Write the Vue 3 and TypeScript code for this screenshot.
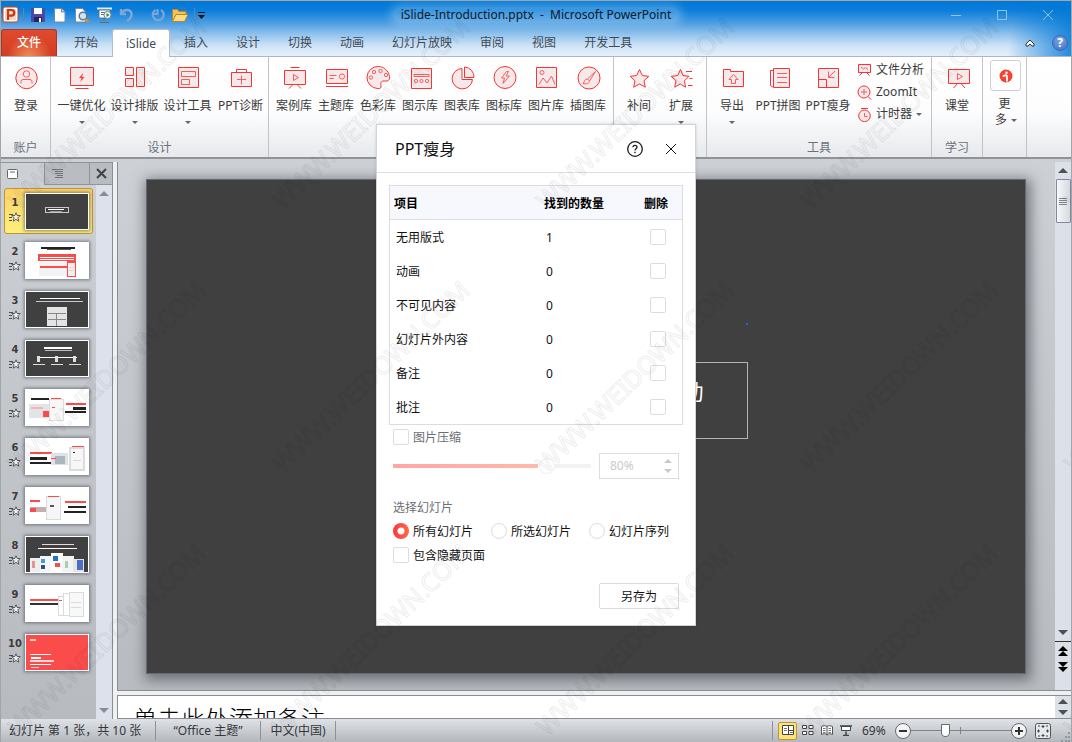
<script setup lang="ts">
import { ref } from 'vue'

interface Shape { d: string; kind?: 'soft' | 'thin' | 'solid' }
interface Tool { label: string; arrow?: boolean; wide?: boolean; shapes: Shape[] }
interface Group { title: string; size: string; tools: Tool[] }
interface Block { x: number; y: number; w: number; h: number; f: string }
interface Thumb { bg: string; blocks: Block[] }

const ring = (x: number, y: number, r: number): string =>
  `M${x - r} ${y}a${r} ${r} 0 1 0 ${2 * r} 0a${r} ${r} 0 1 0 ${-2 * r} 0z`

const b = (x: number, y: number, w: number, h: number, f: string): Block => ({ x, y, w, h, f })

const tabs: string[] = ['插入', '设计', '切换', '动画', '幻灯片放映', '审阅', '视图', '开发工具']

const star = 'M13.5 4.5l2.8 6 6.5.8-4.8 4.5 1.3 6.4-5.8-3.2-5.8 3.2 1.3-6.4-4.8-4.500 6.500-.8z'

const groups: Group[] = [
  {
    title: '账户', size: 'g-small',
    tools: [{ label: '登录', shapes: [
      { d: ring(13.5, 13, 10.7), kind: 'soft' },
      { d: ring(13.5, 9, 3.2), kind: 'thin' },
      { d: 'M8 18.5v-2a2 2 0 0 1 2-2h7a2 2 0 0 1 2 2v2', kind: 'thin' },
    ] }],
  },
  {
    title: '设计', size: 'g-design',
    tools: [
      { label: '一键优化', arrow: true, shapes: [
        { d: 'M1.5 2.5h23v18h-23z', kind: 'soft' }, { d: 'M6.5 23.5h13' },
        { d: 'M14 8l-4 5h2.4l-1 4 4.2-5h-2.4z', kind: 'solid' },
      ] },
      { label: '设计排版', arrow: true, shapes: [
        { d: 'M3.5 2.5h8v8h-8z', kind: 'soft' }, { d: 'M3.5 13.5h8v8h-8z', kind: 'soft' }, { d: 'M14.5 2.5h8v19h-8z', kind: 'soft' },
      ] },
      { label: '设计工具', arrow: true, shapes: [
        { d: 'M3.5 2.5h20v20h-20z', kind: 'soft' }, { d: 'M6.5 6.5h14v5h-14z', kind: 'thin' }, { d: 'M6.5 14.5h8v5h-8z', kind: 'thin' },
      ] },
      { label: 'PPT诊断', shapes: [
        { d: 'M3.5 7.5h20v14h-20z', kind: 'soft' }, { d: 'M8.5 7.5v-3h10v3' }, { d: 'M13.5 10.5v9M9 14.5h9', kind: 'thin' },
      ] },
    ],
  },
  {
    title: '', size: 'g-library',
    tools: [
      { label: '案例库', shapes: [
        { d: 'M3.5 5.5h21v14h-21z', kind: 'soft' }, { d: 'M9.5 2.5h9M12 19.5l-4 4M16 19.5l4 4' }, { d: 'M12.5 9.5v6l5-3z', kind: 'thin' },
      ] },
      { label: '主题库', shapes: [
        { d: 'M3.5 4.5h21v14h-21z', kind: 'soft' }, { d: 'M3 21.5h22' }, { d: 'M6.5 10.5h7M6.5 13.5h4.5' + ring(19, 11.5, 2.6), kind: 'thin' },
      ] },
      { label: '色彩库', shapes: [
        { d: 'M13.5 1.5a11 11 0 0 0-1 22c2.5.5 4-.5 3.5-3-.5-3 0-4.5 3-4.5h3c2-.5 3-2 2.5-4.5-.8-5.500-5.500-10-11-10z', kind: 'soft' },
        { d: ring(6, 12.5, 1.7) + ring(9, 7, 1.7) + ring(15.5, 6, 1.7) + ring(21, 10, 1.7), kind: 'thin' },
      ] },
      { label: '图示库', shapes: [
        { d: 'M4.5 3.5h20v20h-20z', kind: 'soft' }, { d: 'M7 9.500h15v2h-15z', kind: 'thin' }, { d: ring(9, 16, 1.6) + ring(14.5, 16, 1.6) + ring(20, 16, 1.6), kind: 'thin' },
      ] },
      { label: '图表库', shapes: [
        { d: 'M13 3.5a10.2 10.2 0 1 0 10.5 11H13z', kind: 'soft' }, { d: 'M15.5 2v10.5h9.5a10 10 0 0 0-9.5-10.5z', kind: 'soft' },
      ] },
      { label: '图标库', shapes: [
        { d: ring(14, 12.5, 11), kind: 'soft' }, { d: 'M15.5 6.5l-5 6.5h3l-1.5 5.5 6.5-7.5h-3.5l2.5-4.5z', kind: 'thin' },
      ] },
      { label: '图片库', shapes: [
        { d: 'M3.5 2.5h20v20h-20z', kind: 'soft' }, { d: ring(9, 7.5, 2) + 'M6 19.5l4-6.5 4 5 4.5-7 3.5 8.5', kind: 'thin' },
      ] },
      { label: '插图库', shapes: [
        { d: ring(14, 13, 11), kind: 'soft' }, { d: 'M20.5 6.5l-8 7.5 2 2zM12.5 14c-3 0-3 3-4.5 4.5 3 .8 6.5 0 6.5-2.5', kind: 'thin' },
      ] },
    ],
  },
  {
    title: '', size: 'g-motion',
    tools: [
      { label: '补间', shapes: [{ d: star, kind: 'soft' }] },
      { label: '扩展', arrow: true, shapes: [{ d: 'M12.5 4.5l2.500 6 6 .8-4.500 4.500 1 6.400-5.300-3.200-5.500 3.200 1.300-6.400-4.800-4.500 6.500-.8z', kind: 'soft' }, { d: 'M18 6.5h6M21.5 13.5h3M20 20.5h4.5' }] },
    ],
  },
  {
    title: '工具', size: 'g-tools',
    tools: [
      { label: '导出', arrow: true, shapes: [
        { d: 'M4.5 4.5h7v2h13v15h-20z', kind: 'soft' }, { d: 'M14.5 9.5l-4.5 5h2.5v4h4v-4h2.5z', kind: 'thin' },
      ] },
      { label: 'PPT拼图', wide: true, shapes: [
        { d: 'M8.5 5.5h-3v14.500a2 2 0 0 0 3 1.5' }, { d: 'M8.5 3.5h16v19h-16z', kind: 'soft' }, { d: 'M12 8.5h10M12 12.5h10M12 17.5h10', kind: 'thin' },
      ] },
      { label: 'PPT瘦身', wide: true, shapes: [
        { d: 'M3.5 3.5h20v19h-20z', kind: 'soft' }, { d: 'M3.5 14.5h8v8h-8z' }, { d: 'M20 6l-6.5 6.500M13.5 6.500v6h6', kind: 'thin' },
      ] },
    ],
  },
  {
    title: '学习', size: 'g-study',
    tools: [{ label: '课堂', shapes: [
      { d: 'M4.5 4.5h21v14h-21z', kind: 'soft' }, { d: 'M13.5 18.5l-4 4.500M17 18.5l4 4.500' }, { d: 'M13.5 8.5v6l5-3z', kind: 'thin' },
    ] }],
  },
]

const quickTools: Tool[] = [
  { label: '文件分析', shapes: [{ d: 'M1.5 1.5h12v8h-12z', kind: 'soft' }, { d: 'M5.5 9.5l-3 3M9.5 9.5l3 3' }, { d: 'M4 4l2.5 2 2-1.5 2.5 2', kind: 'thin' }] },
  { label: 'ZoomIt', shapes: [{ d: ring(7, 7, 6), kind: 'soft' }, { d: 'M11 11.5l3 3' }, { d: 'M7 4v6M4 7h6', kind: 'thin' }] },
  { label: '计时器', arrow: true, shapes: [{ d: ring(7.5, 8.8, 5.8), kind: 'soft' }, { d: 'M4 1.5h7' }, { d: 'M7.5 6v3.5h3', kind: 'thin' }] },
]

const red = '#fb4c4c'
const ink = '#222222'
const pale = '#d8dadd'
const thumbs: Thumb[] = [
  { bg: '#404040', blocks: [b(20, 14, 24, 6, '#c8c8c8'), b(21, 15, 22, 4, '#404040'), b(23, 16, 16, 1, '#ffffff'), b(25, 18, 12, 1, '#9a9a9a')] },
  { bg: '#ffffff', blocks: [b(16, 5, 34, 2, ink), b(22, 7, 24, 1, '#555555'), b(13, 12, 38, 7, red), b(15, 15, 34, 1, '#ffffff'), b(15, 17, 34, 1, '#ffffff'), b(14, 20, 37, 14, '#f2f3f5'), b(15, 24, 27, 2, red), b(42, 19, 9, 16, red), b(43, 21, 7, 13, '#f1eeee'), b(44, 25, 5, 1, pale), b(44, 28, 5, 1, pale)] },
  { bg: '#404040', blocks: [b(15, 7, 40, 1, '#ffffff'), b(11, 10, 47, 1, '#c9c9c9'), b(22, 16, 20, 19, '#e4e4e4'), b(23, 22, 18, 1, '#888888'), b(23, 28, 18, 1, '#888888'), b(31, 22, 1, 13, '#888888')] },
  { bg: '#404040', blocks: [b(19, 7, 28, 2, '#ffffff'), b(20, 10, 27, 1, '#bbbbbb'), b(13, 17, 39, 1, '#ffffff'), b(12, 16, 3, 6, '#e0e0e0'), b(30, 16, 3, 6, '#e0e0e0'), b(48, 16, 3, 6, '#e0e0e0'), b(8, 24, 12, 1, '#dddddd'), b(26, 24, 12, 1, '#dddddd'), b(44, 24, 12, 1, '#dddddd')] },
  { bg: '#ffffff', blocks: [b(6, 9, 18, 2, ink), b(4, 15, 21, 14, '#e2e4e7'), b(6, 18, 12, 2, '#f6b5b5'), b(18, 22, 7, 6, red), b(24, 10, 15, 22, '#dcdcdc'), b(25, 11, 13, 20, '#f7f7f7'), b(26, 9, 10, 1, red), b(27, 18, 3, 1, red), b(41, 14, 20, 2, red), b(48, 18, 13, 3, ink), b(40, 22, 21, 2, ink)] },
  { bg: '#ffffff', blocks: [b(5, 14, 22, 2, red), b(5, 19, 17, 3, ink), b(5, 24, 21, 2, ink), b(26, 15, 17, 12, '#dfe3e8'), b(30, 18, 10, 8, '#aab7c0'), b(26, 20, 5, 1, red), b(44, 9, 16, 24, '#dcdcdc'), b(46, 11, 12, 20, '#f7f7f7'), b(47, 8, 12, 1, red), b(48, 14, 2, 1, ink), b(48, 22, 8, 1, pale)] },
  { bg: '#ffffff', blocks: [b(5, 13, 10, 2, red), b(5, 20, 16, 5, '#c3b0b0'), b(5, 21, 6, 4, red), b(21, 9, 15, 24, '#dcdcdc'), b(22, 10, 13, 22, '#f6f6f6'), b(23, 9, 11, 1, red), b(25, 18, 4, 2, '#555555'), b(40, 14, 21, 2, red), b(43, 19, 18, 2, ink), b(39, 24, 22, 2, ink)] },
  { bg: '#404040', blocks: [b(17, 8, 32, 1, '#f1d6d6'), b(13, 12, 39, 1, '#ffffff'), b(5, 22, 13, 14, '#eeeeee'), b(15, 20, 13, 16, '#f5f5f5'), b(26, 17, 12, 19, '#ffffff'), b(37, 20, 12, 16, '#f3f3f3'), b(48, 23, 11, 13, '#e5e5e5'), b(7, 25, 3, 7, '#e79292'), b(16, 23, 4, 4, '#3c9ed2'), b(16, 29, 4, 4, '#2d4f88'), b(28, 20, 5, 5, '#1b77c7'), b(30, 27, 5, 4, red), b(40, 25, 3, 7, '#a1d1af'), b(52, 24, 6, 10, '#4b6fc4')] },
  { bg: '#ffffff', blocks: [b(5, 14, 28, 2, red), b(5, 18, 28, 2, '#333333'), b(33, 11, 8, 20, '#d9dcdf'), b(34, 12, 7, 18, '#ffffff'), b(38, 8, 10, 23, '#d9dcdf'), b(39, 9, 8, 21, '#ffffff'), b(44, 7, 15, 25, '#d9dcdf'), b(45, 8, 13, 23, '#f8f8f8'), b(46, 17, 10, 1, pale), b(46, 22, 10, 1, pale), b(34, 15, 3, 1, red)] },
  { bg: '#fb4c4c', blocks: [b(5, 5, 6, 2, '#ffd0d0'), b(5, 20, 21, 1, '#ffffff'), b(6, 23, 10, 2, '#ffffff'), b(5, 26, 24, 2, '#ffd9d9'), b(5, 30, 21, 1, '#ffffff'), b(6, 33, 8, 1, '#ffd0d0')] },
]

const rows = ref([
  { name: '无用版式', count: 1, remove: false },
  { name: '动画', count: 0, remove: false },
  { name: '不可见内容', count: 0, remove: false },
  { name: '幻灯片外内容', count: 0, remove: false },
  { name: '备注', count: 0, remove: false },
  { name: '批注', count: 0, remove: false },
])
const scopes: string[] = ['所有幻灯片', '所选幻灯片', '幻灯片序列']
const scope = ref('所有幻灯片')
const compress = ref(false)
const hidden = ref(false)
const quality = ref(80)
const zoom = ref(33)
const current = ref(0)
</script>

<template>
  <div class="window">
    <header class="chrome">
      <div class="titlebar">
        <div class="quick">
          <svg width="196" height="20" viewBox="0 0 196 20" aria-hidden="true">
            <rect x="2" y="2" width="15" height="15" rx="2" fill="#fff" stroke="#c4421c" />
            <rect x="4" y="4" width="11" height="11" fill="#f6d6c5" />
            <path d="M7 15V5h3.500a2.700 2.700 0 0 1 0 5.600H7" fill="none" stroke="#c8390f" stroke-width="2.200" />
            <path d="M22.500 3v13" stroke="#5c86b5" />
            <path d="M30 3h13l1 1v13H30z" fill="#4a49a8" /><path d="M33 3h8v6h-8z" fill="#fff" /><path d="M33 12h8v5h-8z" fill="#25255e" /><path d="M38 13h2v4h-2z" fill="#fff" />
            <path d="M53.500 3.500h7l3.500 3.500v10H53.500z" fill="#fff" stroke="#7189a8" /><path d="M60.500 3.500V7H64" fill="#cbd7e8" stroke="#7189a8" />
            <path d="M74.500 3.500h7l3 3.500v10h-10z" fill="#fff" stroke="#7189a8" /><circle cx="82" cy="11" r="3.800" fill="#cfe6f7" stroke="#5e7894" stroke-width="1.500" /><path d="M84.500 14l3 3" stroke="#e38b1f" stroke-width="2.200" />
            <path d="M96 3.500h15" stroke="#e7ebf0" stroke-width="2" /><path d="M98 5h11v8H98z" fill="#fff" stroke="#637892" /><path d="M100 7.500h4M100 9.500h3M103 13v3M99 17.500h9" stroke="#566a82" /><circle cx="106.500" cy="10" r="3.600" fill="#eef6ef" stroke="#6f8298" /><path d="M105.500 8l3 2-3 2z" fill="#2d8a3c" />
            <path d="M120 4v5h5M120.500 8.500c3-5 10-4.500 10 1 0 3-2 5-4.500 6.500" fill="none" stroke="#7fa6d6" stroke-width="2.400" />
            <path d="M137.500 8.500h4l-2 2z" fill="#4c79b1" />
            <path d="M154.500 5a5.500 5.500 0 1 0 5.500 0M156.500 4v5h-5" fill="none" stroke="#7fa6d6" stroke-width="2.200" />
            <path d="M171.500 16.500v-12h5l1.500 2h7v3" fill="#f3c453" stroke="#b9862a" /><path d="M171.500 16.500l3.500-7h12l-3.500 7z" fill="#fbdc85" stroke="#b9862a" /><path d="M180 3.500c3-1.500 5 0 5 2" fill="none" stroke="#4d7eb8" />
            <path d="M193.500 3v13" stroke="#5c86b5" />
          </svg>
          <button class="bare" aria-label="自定义快速访问工具栏">
            <svg width="9" height="8" viewBox="0 0 9 8"><path d="M1 1.500h7" stroke="#111" /><path d="M1 4h7l-3.500 4z" fill="#111" /></svg>
          </button>
        </div>
        <h1>iSlide-Introduction.pptx&nbsp; -&nbsp; Microsoft PowerPoint</h1>
        <div class="controls">
          <button class="bare" aria-label="最小化"><svg width="10" height="10"><path d="M0 5.500h10" /></svg></button>
          <button class="bare" aria-label="最大化"><svg width="10" height="10"><path d="M.5.5h9v9h-9z" /></svg></button>
          <button class="bare" aria-label="关闭"><svg width="10" height="10"><path d="M0 0l10 10M10 0L0 10" /></svg></button>
        </div>
      </div>
      <nav class="tabs">
        <button class="tab file">文件</button>
        <button class="tab">开始</button>
        <button class="tab active">iSlide</button>
        <button v-for="t in tabs" :key="t" class="tab">{{ t }}</button>
        <span class="grow"></span>
        <button class="bare" aria-label="收起功能区"><svg width="10" height="8"><path d="M1 5l4-4 4 4v2L7 7 5 5 3 7H1z" fill="#fff" stroke="#333" /></svg></button>
        <button class="bare help" aria-label="帮助">?</button>
      </nav>
    </header>

    <section class="ribbon">
      <div v-for="g in groups" :key="g.size" class="group" :class="g.size">
        <div class="tools">
          <button v-for="t in g.tools" :key="t.label" class="tool" :class="{ wide: t.wide }">
            <svg class="line-icon" width="26" height="26" viewBox="0 0 26 26"><path v-for="s in t.shapes" :key="s.d" :d="s.d" :class="s.kind" /></svg>
            <span>{{ t.label }}</span>
            <i v-if="t.arrow" class="caret"></i>
          </button>
          <div v-if="g.title === '工具'" class="stack">
            <button v-for="q in quickTools" :key="q.label" class="row-tool">
              <svg class="line-icon" width="15" height="15" viewBox="0 0 15 15"><path v-for="s in q.shapes" :key="s.d" :d="s.d" :class="s.kind" /></svg>
              <span>{{ q.label }}</span>
              <i v-if="q.arrow" class="caret"></i>
            </button>
          </div>
        </div>
        <p class="group-title">{{ g.title }}</p>
      </div>
      <div class="group g-more">
        <button class="more-tool">
          <span class="more-box">
            <svg width="14" height="14" viewBox="0 0 14 14"><circle cx="7" cy="7" r="6.500" fill="#f9412f" /><circle cx="7.500" cy="3.800" r="1.300" fill="#fff" /><path d="M4 7.500c1.500-1.500 4-1.800 4 0v5" fill="none" stroke="#fff" stroke-width="1.800" /></svg>
          </span>
          <span>更</span>
          <span class="more-line">多<i class="caret"></i></span>
        </button>
      </div>
    </section>

    <main class="work">
      <aside class="side">
        <div class="side-tabs">
          <button class="side-tab on" aria-label="幻灯片"><svg width="11" height="10"><rect x=".5" y=".5" width="10" height="9" rx="1" fill="#fff" stroke="#666" /><path d="M3 3h5" stroke="#666" /></svg></button>
          <button class="side-tab" aria-label="大纲"><svg width="12" height="10"><path d="M0 .5h11M3 2.500h8M3 4.500h8M5 6.500h6M3 8.500h8" stroke="#6f7276" /></svg></button>
          <button class="side-tab shut" aria-label="关闭"><svg width="11" height="11"><path d="M1 1l9 9M10 1l-9 9" stroke="#404346" stroke-width="2" /></svg></button>
        </div>
        <div class="side-body">
          <ol class="thumbs">
            <li v-for="(t, i) in thumbs" :key="i">
              <button class="thumb" :class="{ picked: current === i }" @click="current = i">
                <span class="mark">
                  <b>{{ i + 1 }}</b>
                  <svg width="12" height="10" viewBox="0 0 12 10"><path d="M0 2.500h4M0 5.500h3M0 8.500h3" stroke="#4b4d50" /><path d="M7 .8l1.200 2.700h3L8.900 5.800l.9 3.400L7 7.400 4.200 9.200l.9-3.400L2.800 3.500h3z" fill="#eef0f2" stroke="#4b4d50" stroke-width=".9" /></svg>
                </span>
                <svg class="page" width="64" height="37" viewBox="0 0 64 37">
                  <rect width="64" height="37" fill="#fff" />
                  <rect x="1" y="1" width="62" height="35" :fill="t.bg" />
                  <rect v-for="(k, n) in t.blocks" :key="n" :x="k.x" :y="k.y" :width="k.w" :height="k.h" :fill="k.f" />
                </svg>
              </button>
            </li>
          </ol>
          <div class="side-scroll"><i class="up"></i><i class="down"></i></div>
        </div>
      </aside>

      <div class="editor">
        <div class="stage">
          <div class="canvas">
            <div class="slide">
              <div class="headline">动</div>
              <i class="dot"></i>
            </div>
          </div>
          <div class="vscroll">
            <i class="up"></i>
            <div class="knob"></div>
            <span class="grow"></span>
            <i class="down"></i>
            <div class="jumps"><span><i class="up"></i><i class="up"></i></span><span><i class="down"></i><i class="down"></i></span></div>
          </div>
        </div>
        <div class="notes">
          <p>单击此处添加备注</p>
          <div class="notes-scroll"><i class="up"></i><i class="down"></i></div>
        </div>
      </div>
    </main>

    <footer class="status">
      <span class="cell first">幻灯片 第 1 张，共 10 张</span>
      <span class="cell theme">“Office 主题”</span>
      <span class="cell lang">中文(中国)</span>
      <span class="grow"></span>
      <div class="views">
        <button class="view on" aria-label="普通视图"><svg width="12" height="11"><path d="M.5.5h11v9H.5zM6.500.5v9M6.500 5.500h5" fill="#fff" stroke="#444" /><path d="M2 3.500h3M2 5.500h3M8 7.500h3" stroke="#777" /></svg></button>
        <button class="view" aria-label="幻灯片浏览"><svg width="12" height="11"><path d="M.5.5h4v3h-4zM7 .5h4v3H7zM.5 6.500h4v3h-4zM7 6.500h4v3H7z" fill="#fff" stroke="#444" /></svg></button>
        <button class="view" aria-label="阅读视图"><svg width="12" height="11"><path d="M.5 1.500c2-1 4-1 5.500 0 1.500-1 3.500-1 5.500 0v8c-2-1-4-1-5.500 0-1.500-1-3.500-1-5.500 0zM6 1.500v9" fill="#fff" stroke="#555" /><path d="M2 3.500h2.500M2 5.500h2.500M2 7.500h2.500M7.500 3.500H10M7.500 5.500H10M7.500 7.500H10" stroke="#777" /></svg></button>
        <button class="view" aria-label="幻灯片放映"><svg width="12" height="11"><path d="M0 1h12M6 6.500v4M3 10.500h6" stroke="#444" stroke-width="1.500" /><path d="M1.500 1.500h9v4h-9z" fill="#fff" stroke="#444" /></svg></button>
      </div>
      <span class="percent">69%</span>
      <button class="round" aria-label="缩小"><svg width="8" height="8"><path d="M0 4h8" /></svg></button>
      <input v-model="zoom" class="zoom" type="range" min="0" max="100" aria-label="缩放" />
      <button class="round" aria-label="放大"><svg width="8" height="8"><path d="M0 4h8M4 0v8" /></svg></button>
      <button class="fit" aria-label="适应窗口"><svg width="16" height="16"><rect x=".5" y=".5" width="15" height="15" rx="2" fill="#e6e9ec" stroke="#555" /><path d="M8 2v3M6.500 3.500h3M8 11v3M6.500 12.500h3M3.500 6.500v3M2 8h3M12.500 6.500v3M11 8h3M3 3h2M11 3h2M3 13h2M11 13h2" stroke="#444" /></svg></button>
      <svg class="grip" width="11" height="11"><path d="M8 1h2v2H8zM5 5h2v2H5zM8 5h2v2H8zM1 9h2v2H1zM5 9h2v2H5zM8 9h2v2H8z" fill="#8f959c" /></svg>
    </footer>

    <section class="dialog" role="dialog" aria-labelledby="dlg-title">
      <div class="dlg-head">
        <h2 id="dlg-title">PPT瘦身</h2>
        <button class="bare" aria-label="帮助"><svg width="16" height="16" viewBox="0 0 16 16"><circle cx="8" cy="8" r="7.300" fill="none" stroke="#1c1c1c" stroke-width="1.300" /><path d="M6 6.300c0-2.600 4-2.600 4 0 0 1.500-2 1.500-2 3.200M8 10.800v1.500" fill="none" stroke="#1c1c1c" stroke-width="1.300" /></svg></button>
        <button class="bare" aria-label="关闭"><svg width="12" height="12"><path d="M1 1l10 10M11 1L1 11" stroke="#111" /></svg></button>
      </div>
      <div class="dlg-body">
        <table>
          <thead><tr><th>项目</th><th>找到的数量</th><th>删除</th></tr></thead>
          <tbody>
            <tr v-for="r in rows" :key="r.name">
              <td>{{ r.name }}</td><td>{{ r.count }}</td>
              <td><input v-model="r.remove" type="checkbox" :aria-label="'删除' + r.name" /></td>
            </tr>
          </tbody>
        </table>
        <div class="form">
          <label class="muted"><input v-model="compress" type="checkbox" /><span>图片压缩</span></label>
          <div class="quality">
            <input v-model="quality" class="slider" type="range" min="0" max="100" disabled aria-label="图片质量" />
            <div class="spin">
              <input type="text" :value="quality + '%'" disabled aria-label="质量百分比" />
              <div class="steps">
                <button class="bare" disabled aria-label="增加"><i class="up"></i></button>
                <button class="bare" disabled aria-label="减少"><i class="down"></i></button>
              </div>
            </div>
          </div>
          <p class="muted pick">选择幻灯片</p>
          <div class="radios">
            <label v-for="s in scopes" :key="s"><input v-model="scope" type="radio" name="scope" :value="s" /><span>{{ s }}</span></label>
          </div>
          <label><input v-model="hidden" type="checkbox" /><span>包含隐藏页面</span></label>
          <div class="actions"><button class="save">另存为</button></div>
        </div>
      </div>
    </section>

    <svg class="stamp" width="100%" height="100%" aria-hidden="true">
      <defs>
        <pattern id="stamp" width="264" height="263" patternUnits="userSpaceOnUse">
          <text x="18" y="210" transform="rotate(-44 18 210)">WWW.WEIDOWN.COM</text>
        </pattern>
      </defs>
      <rect width="100%" height="100%" fill="url(#stamp)" />
    </svg>
  </div>
</template>

<style>
body { margin: 0; }
</style>

<style scoped>
.window { position: relative; box-sizing: border-box; display: flex; flex-direction: column; height: 100vh; overflow: hidden; border: 1px solid #a3a5a8; border-width: 1px 1px 0; background: #c3c7cc; font-family: "Noto Sans", "Noto Sans CJK SC", sans-serif; font-size: 12px; line-height: 16px; color: #3b3b3b; }
.window *, .window *::before { box-sizing: border-box; }
button, input { margin: 0; font: inherit; color: inherit; }
button { padding: 0; border: 0; background: none; }
h1, h2, p, ol { margin: 0; padding: 0; font-weight: 400; }
.bare { display: flex; align-items: center; justify-content: center; }
.grow { flex: 1; }
.up, .down { display: block; width: 0; height: 0; border: 5px solid transparent; border-top-width: 0; border-bottom: 5px solid #4d5053; }
.down { border-bottom-width: 0; border-top: 5px solid #4d5053; }
.caret { display: block; width: 0; height: 0; border: 3px solid transparent; border-top-color: #666; border-bottom: 0; }

.chrome { flex: none; background: linear-gradient(100deg, transparent 94%, #0078d7 101%), linear-gradient(#0078d7 0, #0a7dd9 16%, #4d9fe2 40%, #8cc0ec 58%, #cfe3f6 80%, #e6f1fb 100%); }
.titlebar { display: grid; grid-template-columns: 1fr auto 1fr; align-items: center; height: 28px; }
.quick { display: flex; align-items: center; }
.titlebar h1 { padding: 0 8px; font-size: 12px; color: #0b1a2b; border-radius: 10px; background: rgba(255, 255, 255, .2); box-shadow: 0 0 8px 4px rgba(255, 255, 255, .2); }
.controls { display: flex; justify-content: flex-end; gap: 36px; padding-right: 18px; }
.controls svg { fill: none; stroke: #8ec4ef; }
.tabs { display: flex; align-items: stretch; height: 28px; border-bottom: 1px solid #b0b6be; }
.tab { padding: 0 14px; color: #3f4a57; }
.tab.file { width: 56px; margin-right: 3px; padding: 0; color: #fff; font-weight: 500; border: 1px solid #b0331d; border-bottom: 0; border-radius: 3px 3px 0 0; background: radial-gradient(ellipse at 50% 110%, #f2915c, transparent 60%), linear-gradient(#e04a2f, #d23c22); }
.tab.active { width: 58px; padding: 0; margin-bottom: -1px; border: 1px solid #b6bcc4; border-bottom: 0; border-radius: 3px 3px 0 0; background: #fff; }
.help { align-self: center; width: 16px; height: 16px; margin: 0 3px 0 17px; border: 1px solid #3c68b4; border-radius: 8px; background: radial-gradient(circle at 50% 30%, #7ea6e6, #3f6fc2); color: #fff; font-size: 12px; font-weight: 700; }

.ribbon { flex: none; display: flex; height: 102px; border-bottom: 2px solid #8f9398; background: linear-gradient(#fff 0, #fdfdfe 55%, #e7e9ec 100%); }
.group { display: flex; flex-direction: column; justify-content: space-between; padding: 8px 4px 0; border-right: 1px solid #c0c3c7; }
.g-small { width: 50px; }
.g-design { width: 218px; }
.g-library { width: 345px; }
.g-motion { width: 93px; }
.g-tools { width: 225px; }
.g-study { width: 51px; }
.g-more { width: 44px; padding: 3px 0 0; }
.tools { display: flex; }
.tool { display: flex; flex-direction: column; align-items: center; flex: none; width: 42px; white-space: nowrap; }
.g-design .tool { width: 53px; }
.tool.wide { width: 50px; }
.tool span { margin-top: 7px; }
.tool .caret { margin-top: 7px; }
.line-icon { display: block; fill: none; stroke: #f53434; stroke-width: 1; overflow: visible; }
.line-icon .soft { fill: #f7e9ea; }
.line-icon .thin { stroke: #f25f5f; }
.line-icon .solid { fill: #f04848; stroke: none; }
.stack { display: flex; flex-direction: column; margin: -6px 0 0 4px; }
.row-tool { display: flex; align-items: center; gap: 4px; height: 22px; white-space: nowrap; }
.group-title { min-height: 17px; text-align: center; color: #6a717b; }
.more-tool { display: flex; flex-direction: column; align-items: center; }
.more-box { display: flex; align-items: center; justify-content: center; width: 31px; height: 31px; margin: 0 0 5px 2px; border: 1px solid #cfcfd6; border-radius: 3px; background: #fff; }
.more-line { display: flex; align-items: center; gap: 4px; padding-left: 3px; }

.work { flex: 1; display: flex; min-height: 0; padding-top: 3px; background: linear-gradient(#cdd1d6, #b7babf); }
.side { display: flex; flex-direction: column; flex: none; width: 112px; border-right: 1px solid #8a8e94; }
.side-tabs { display: flex; height: 23px; }
.side-tab { display: flex; align-items: center; width: 43px; padding-left: 6px; border: 0 solid #8f949a; border-top-width: 1px; }
.side-tab + .side-tab { justify-content: center; width: 45px; padding: 0 19px 0 0; border-left-width: 1px; border-bottom-width: 1px; background: #b9bdc2; }
.side-tab + .side-tab.shut { flex: 1; padding: 0; }
.side-body { flex: 1; display: flex; min-height: 0; }
.thumbs { flex: 1; overflow: hidden; padding: 3px 0 0 3px; list-style: none; }
.thumb { display: grid; grid-template-columns: 20px auto; justify-content: start; align-items: center; width: 89px; height: 46px; margin-bottom: 3px; border: 1px solid transparent; border-radius: 3px; }
.thumb.picked { border-color: #c79033; background: linear-gradient(#fbd26b, #fdf07b); }
.mark { display: flex; flex-direction: column; align-items: center; gap: 4px; margin-bottom: 4px; }
.mark b { font: bold 11px/11px "DejaVu Sans Condensed", "DejaVu Sans", sans-serif; }
.page { display: block; box-shadow: 0 0 3px 1px rgba(60, 65, 75, .6); }
.side-scroll { display: flex; flex-direction: column; justify-content: space-between; align-items: center; width: 16px; padding: 6px 0; background: #dce1ec; }
.side-scroll .up { border-bottom-color: #84919a; }
.side-scroll .down { border-top-color: #84919a; }

.editor { flex: 1; display: flex; flex-direction: column; min-width: 0; border-left: 4px solid #eef0f2; }
.stage { flex: 1; display: flex; min-height: 0; border: 1px solid #8a8e94; border-width: 0 0 1px 1px; }
.canvas { flex: 1; display: flex; align-items: center; justify-content: center; min-width: 0; padding: 0 29px 0 28px; overflow: hidden; }
.slide { position: relative; flex: none; width: 100%; aspect-ratio: 16 / 9; border: 1px solid #656a70; background: #404040; box-shadow: 2px 3px 12px 3px rgba(60, 65, 72, .6); }
.headline { position: absolute; left: 31.6%; top: 37%; width: 36.8%; height: 15.6%; padding: 16px 43px 0 0; border: 1px solid #b4b4b4; color: #fff; font-size: 22px; line-height: 24px; text-align: right; }
.dot { position: absolute; left: 68.2%; top: 29.1%; width: 2px; height: 2px; background: #1a5cff; }
.vscroll { display: flex; flex-direction: column; align-items: center; width: 16px; padding-top: 6px; background: #dce1e9; }
.knob { width: 15px; height: 44px; margin-top: 6px; border: 1px solid #8189a0; border-radius: 1px; background: repeating-linear-gradient(#808387 0 1px, transparent 1px 2px) center / 8px 7px no-repeat, linear-gradient(90deg, #f7f8fa, #d5d9df); }
.jumps { display: flex; flex-direction: column; align-items: center; gap: 6px; align-self: stretch; height: 49px; margin-top: 6px; padding-top: 4px; border-top: 1px solid #333; }
.jumps .up { border-bottom-color: #000; }
.jumps .down { border-top-color: #000; }
.notes { flex: none; display: flex; justify-content: space-between; height: 24px; margin-top: 4px; overflow: hidden; border: 1px solid #8a8e94; border-right: 0; background: #fff; box-shadow: 0 -4px 0 #eef0f2; }
.notes p { padding: 9px 0 0 15px; font-size: 24px; line-height: 26px; font-weight: 300; color: #000; font-family: "Noto Sans CJK SC", sans-serif; white-space: nowrap; }
.notes-scroll { display: flex; flex-direction: column; align-items: center; justify-content: space-around; width: 16px; background: #dce1e9; }

.status { flex: none; display: flex; align-items: center; height: 23px; color: #33373b; background: linear-gradient(#dfe2e6, #b4b8bd); white-space: nowrap; }
.cell { height: 19px; line-height: 19px; border-right: 1px solid #8e9298; }
.cell.first { width: 155px; padding-left: 8px; }
.cell.theme { width: 105px; text-align: center; }
.cell.lang { width: 75px; text-align: center; }
.views { display: flex; align-items: center; gap: 2px; height: 19px; padding-left: 5px; border-left: 1px solid #8e9298; }
.view { display: flex; align-items: center; justify-content: center; width: 17px; height: 18px; border: 1px solid transparent; border-radius: 2px; }
.view.on { width: 19px; border-color: #c2952c; background: #fde27a; }
.percent { width: 26px; margin: 0 7px 0 8px; }
.round { display: flex; align-items: center; justify-content: center; width: 16px; height: 16px; border: 1px solid #666b70; border-radius: 8px; background: #f3f4f6; }
.round svg { fill: none; stroke: #333; stroke-width: 2; }
.zoom { appearance: none; width: 100px; height: 16px; background: linear-gradient(#7e848b, #7e848b) 49px center / 1px 7px no-repeat, linear-gradient(#7e848b, #7e848b) center / 100% 1px no-repeat; }
.zoom::-webkit-slider-thumb { appearance: none; width: 9px; height: 13px; background: #fff; border: 1px solid #666b70; border-radius: 1px 1px 5px 5px; }
.fit { margin-left: 8px; height: 16px; }
.grip { align-self: flex-end; margin-left: 9px; }

.dialog { position: absolute; left: calc(50% - 160px); top: 123px; width: 320px; border: 1px solid #d2d3d6; background: #fff; color: #111; box-shadow: 0 0 3px rgba(0, 0, 0, .15); }
.dlg-head { display: flex; align-items: center; gap: 22px; height: 48px; padding: 0 18px; border-bottom: 1px solid #dcdde2; }
.dlg-head h2 { flex: 1; font-size: 16px; line-height: 24px; }
.dlg-body { padding: 12px; }
table { width: 294px; border: 1px solid #dcdde3; border-collapse: separate; border-spacing: 0; table-layout: fixed; }
th, td { height: 34px; padding: 2px 0 0 6px; text-align: left; font-weight: 400; vertical-align: middle; }
th { padding-left: 4px; font-weight: 700; color: #000; background: #f7f8fd; border-bottom: 1px solid #dcdde3; }
th:nth-child(1) { width: 150px; }
th:nth-child(2) { width: 90px; }
th:nth-child(3) { padding: 2px 0 0; text-align: center; }
td:nth-child(3) { padding: 0 0 0 4px; }
.dialog input[type="checkbox"], .dialog input[type="radio"] { appearance: none; flex: none; display: block; width: 16px; height: 16px; border: 1px solid #dcdde0; border-radius: 2px; background: #fff; }
.dialog td input[type="checkbox"] { margin: 0 auto; }
.dialog input[type="checkbox"]:checked { background: #fb5a4a; }
.dialog input[type="radio"] { border-radius: 8px; }
.dialog input[type="radio"]:checked { border: 0; background: radial-gradient(circle, #fff 0 3px, transparent 4px), linear-gradient(90deg, #fb3640, #fd6a45); }
.form { padding: 4px 4px 0; }
.form label { display: flex; align-items: center; gap: 4px; height: 16px; white-space: nowrap; }
.form label span { padding-top: 2px; }
.muted { color: #6b6e75; }
.quality { display: flex; align-items: center; justify-content: space-between; width: 286px; margin-top: 8px; }
.slider { appearance: none; width: 198px; height: 16px; background: linear-gradient(90deg, #ffa6a8, #ffb9aa) left center / 145px 4px no-repeat, linear-gradient(#f1f2f4, #f1f2f4) right center / 37px 4px no-repeat; border-radius: 2px; }
.slider::-webkit-slider-thumb { appearance: none; width: 16px; height: 16px; border: 1px solid #eef0f2; border-radius: 8px; background: #fff; }
.spin { display: flex; width: 80px; height: 26px; border: 1px solid #dcdde0; }
.spin input { flex: 1; width: 40px; padding: 0 0 0 10px; border: 0; background: none; color: #c9cacd; }
.steps { display: flex; flex-direction: column; justify-content: space-evenly; width: 14px; }
.steps .up { border-width: 0 4px 4px; border-bottom-color: #c8c9cc; }
.steps .down { border-width: 4px 4px 0; border-top-color: #c8c9cc; }
.steps .bare { justify-content: flex-start; }
.pick { margin-top: 21px; }
.radios { display: flex; margin: 7px 0 8px; }
.form .radios label { flex: none; width: 98px; }
.actions { display: flex; justify-content: flex-end; width: 286px; margin-top: 20px; padding-bottom: 4px; }
.save { width: 80px; height: 26px; padding-top: 2px; border: 1px solid #dcdde0; border-radius: 2px; background: #fff; }

.stamp { position: absolute; inset: 0; pointer-events: none; }
.stamp text { font-family: "Noto Sans", sans-serif; font-size: 25px; fill: none; stroke: #000; stroke-opacity: .07; stroke-width: 1; }
</style>
